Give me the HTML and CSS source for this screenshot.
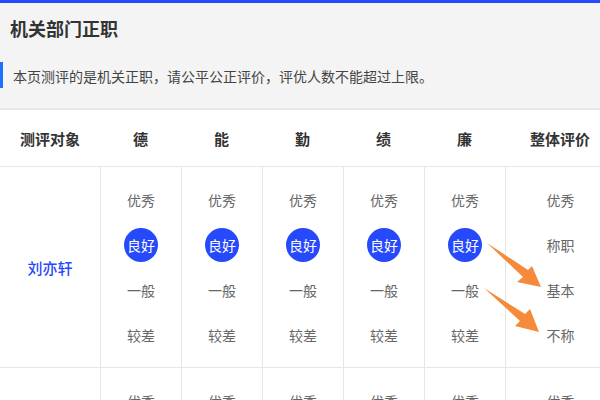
FILE: index.html
```html
<!DOCTYPE html>
<html>
<head>
    <meta charset="utf-8">
    <title>机关部门正职</title>
    <link rel="stylesheet" href="styles.css">
</head>
<body>
    <div class="page">
        <div class="top-bar"></div>

        <div class="head">
            <h1 class="title">机关部门正职</h1>
            <div class="notice">本页测评的是机关正职，请公平公正评价，评优人数不能超过上限。</div>
        </div>

        <div class="table">
            <div class="row row-head">
                <div class="cell">测评对象</div>
                <div class="cell">德</div>
                <div class="cell">能</div>
                <div class="cell">勤</div>
                <div class="cell">绩</div>
                <div class="cell">廉</div>
                <div class="cell">整体评价</div>
            </div>

            <div class="row">
                <div class="cell name">刘亦轩</div>
                <div class="cell opts">
                    <span>优秀</span><span><b class="on">良好</b></span><span>一般</span><span>较差</span>
                </div>
                <div class="cell opts">
                    <span>优秀</span><span><b class="on">良好</b></span><span>一般</span><span>较差</span>
                </div>
                <div class="cell opts">
                    <span>优秀</span><span><b class="on">良好</b></span><span>一般</span><span>较差</span>
                </div>
                <div class="cell opts">
                    <span>优秀</span><span><b class="on">良好</b></span><span>一般</span><span>较差</span>
                </div>
                <div class="cell opts">
                    <span>优秀</span><span><b class="on">良好</b></span><span>一般</span><span>较差</span>
                </div>
                <div class="cell opts">
                    <span>优秀</span><span>称职</span><span>基本</span><span>不称</span>
                </div>
            </div>

            <div class="row">
                <div class="cell name"></div>
                <div class="cell opts"><span>优秀</span><span>良好</span><span>一般</span><span>较差</span></div>
                <div class="cell opts"><span>优秀</span><span>良好</span><span>一般</span><span>较差</span></div>
                <div class="cell opts"><span>优秀</span><span>良好</span><span>一般</span><span>较差</span></div>
                <div class="cell opts"><span>优秀</span><span>良好</span><span>一般</span><span>较差</span></div>
                <div class="cell opts"><span>优秀</span><span>良好</span><span>一般</span><span>较差</span></div>
                <div class="cell opts"><span>优秀</span><span>称职</span><span>基本</span><span>不称</span></div>
            </div>
        </div>

        <!-- 标注箭头 -->
        <svg class="arrows" width="600" height="400" viewBox="0 0 600 400">
            <polygon points="487,243 528,270 532,266 541,287 517,282 523,277" />
            <polygon points="484,288 525,314 530,309 539,332 515,326 520,321" />
        </svg>
    </div>
</body>
</html>
```

FILE: styles.css
```css
html, body {
    margin: 0;
    padding: 0;
}
body {
    font-family: "Noto Sans CJK SC", "Liberation Sans", sans-serif;
    background: #fff;
    color: #333;
    width: 600px;
    height: 400px;
    overflow: hidden;
}
.page {
    position: relative;
}
.top-bar {
    height: 3px;
    background: #2649fb;
}
.head {
    background: #f4f4f4;
    height: 107px;
    border-bottom: 2px solid #e8e8e8;
    padding-top: 1px;
    box-sizing: border-box;
}
.title {
    margin: 0;
    padding-left: 10px;
    font-size: 18px;
    font-weight: bold;
    line-height: 24px;
    margin-top: 12px;
    color: #333;
}
.notice {
    margin-top: 22px;
    height: 26px;
    line-height: 28px;
    border-left: 3px solid #1f6fff;
    padding-left: 10px;
    font-size: 14px;
    color: #444;
}
.table {
    width: 614px;
}
.row {
    display: grid;
    grid-template-columns: 100px repeat(5, 81px) 110px;
    border-bottom: 1px solid #e6e6e6;
}
.row-head {
    height: 56px;
    align-items: center;
}
.row-head .cell {
    text-align: center;
    font-size: 15px;
    font-weight: bold;
    color: #333;
}
.row .cell + .cell {
    border-left: 1px solid #e6e6e6;
}
.row-head .cell + .cell {
    border-left: none;
}
.name {
    display: flex;
    align-items: center;
    justify-content: center;
    height: 200px;
    font-size: 15px;
    color: #2649fb;
    font-weight: 500;
}
.opts {
    display: flex;
    flex-direction: column;
    padding-top: 10px;
    height: 200px;
    box-sizing: border-box;
}
.opts span {
    height: 45px;
    display: flex;
    align-items: center;
    justify-content: center;
    font-size: 14px;
    color: #666;
}
.on {
    display: flex;
    align-items: center;
    justify-content: center;
    width: 34px;
    height: 34px;
    border-radius: 50%;
    background: #2649fb;
    color: #fff;
    font-size: 14px;
    font-weight: normal;
}
.arrows {
    position: absolute;
    left: 0;
    top: 0;
    pointer-events: none;
}
.arrows polygon {
    fill: #f68a3b;
}
```
